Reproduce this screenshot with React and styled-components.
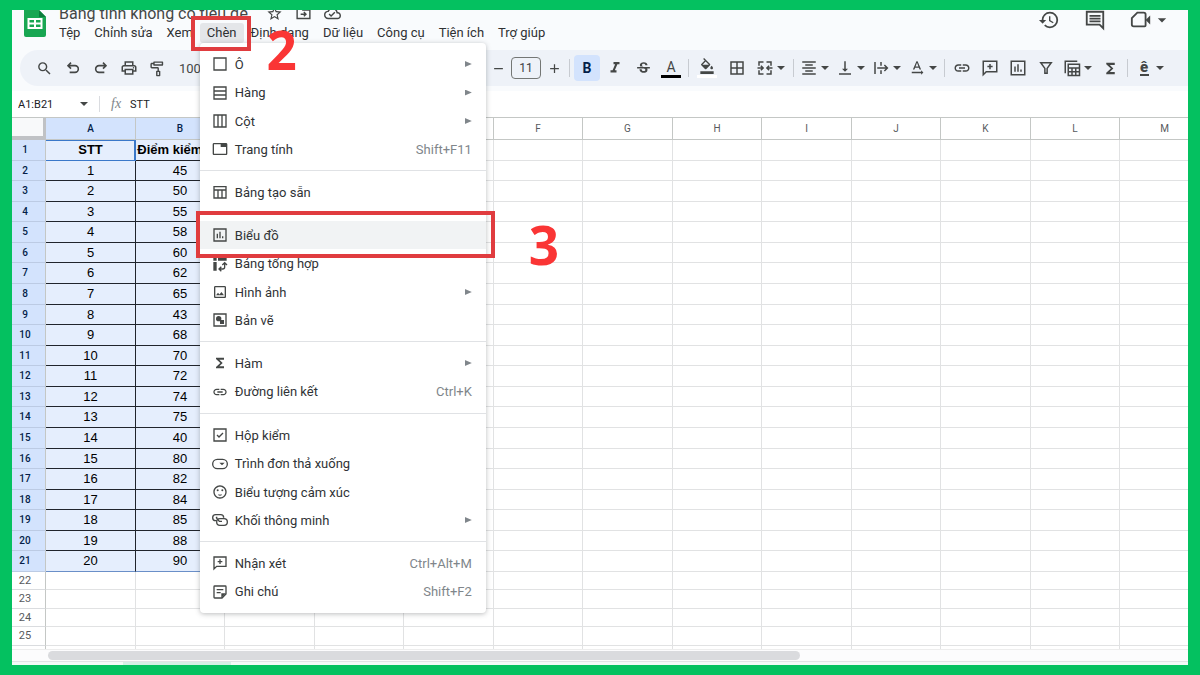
import * as React from 'react';
import styled, { createGlobalStyle, css } from "styled-components";
import {
    MdSearch,
    MdOutlinePrint,
    MdOutlineImagesearchRoller,
    MdFormatItalic,
    MdStrikethroughS,
    MdFormatColorFill,
    MdBorderAll,
    MdFormatAlignCenter,
    MdVerticalAlignBottom,
    MdTextRotationNone,
    MdLink,
    MdFunctions,
    MdArrowDropDown,
    MdAdd,
    MdRemove,
    MdStarBorder,
    MdHistory,
    MdOutlineImage,
    MdOutlineTab,
    MdSentimentSatisfied,
    MdOutlineCloudDone,
} from "react-icons/md";

const GlobalStyle = createGlobalStyle`
    * {
        box-sizing: border-box;
    }

    body {
        margin: 0;
        font-family: Roboto, "Liberation Sans", sans-serif;
        color: #3c4043;
    }

    button, input, select {
        font: inherit;
        color: inherit;
        border: 0;
        padding: 0;
        margin: 0;
        background: none;
    }
`;

const Frame = styled.div`
    height: 100vh;
    padding: 10px 12px;
    background: #04c160;
`;

const Sheet = styled.div`
    display: flex;
    flex-direction: column;
    height: 100%;
    overflow: hidden;
    background: #f9fbfd;
`;

/* ---------- header ---------- */

const Header = styled.header`
    display: flex;
    height: 40px;
    flex: none;
    padding: 0 16px 0 11px;
`;

const Logo = styled.svg`
    width: 24px;
    height: 28px;
    flex: none;
`;

const HeaderMain = styled.div`
    padding-left: 5px;
`;

const TitleRow = styled.div`
    display: flex;
    align-items: flex-end;
    height: 13px;
    padding-left: 7px;
    overflow: hidden;
`;

const Title = styled.h1`
    margin: 0;
    width: 207px;
    font-size: 16px;
    font-weight: 400;
    line-height: 18px;
    white-space: nowrap;
    color: #444746;
`;

const TitleIcon = styled.button`
    display: flex;
    width: 29px;
    height: 18px;
    color: #444746;
`;

const MenuBar = styled.nav`
    display: flex;
`;

const MenuAnchor = styled.div`
    position: relative;
    display: flex;
`;

const MenuButton = styled.button`
    height: 20px;
    padding: 0 7px;
    border-radius: 3px;
    font-size: 13px;
    line-height: 20px;
    white-space: nowrap;
    color: #2f3133;
    background: ${props => props.$open ? "#e4e6e9" : "none"};
`;

const Actions = styled.div`
    display: flex;
    align-items: center;
    gap: 24px;
    height: 20px;
    margin-left: auto;
`;

const ActionButton = styled.button`
    display: flex;
    align-items: center;
    color: #444746;
`;

/* ---------- toolbar ---------- */

const Toolbar = styled.div`
    display: flex;
    align-items: center;
    flex: none;
    height: 36px;
    margin: 0 0 5px 8px;
    padding-left: 9px;
    overflow: hidden;
    border-radius: 18px 0 0 18px;
    background: #eef2f8;
`;

const Tool = styled.button`
    display: flex;
    align-items: center;
    justify-content: center;
    flex: none;
    width: ${props => props.$wide ? 28 : 26}px;
    height: 26px;
    margin: 0 1px;
    border-radius: 4px;
    font-size: 14px;
    color: #444746;

    ${props => props.$active && css`
        font-weight: 700;
        color: #041e49;
        background: #d3e3fd;
    `}
`;

const SplitTool = styled(Tool)`
    gap: 2px;
    width: ${props => props.$wide ? 36 : 34}px;
`;

const Step = styled(Tool)`
    width: 24px;
    margin: 0;
`;

const Separator = styled.span`
    flex: none;
    width: 1px;
    height: 18px;
    margin: 0 3px;
    background: #c7cbd1;
`;

const ToolSelect = styled.select`
    flex: none;
    appearance: none;
    width: ${props => props.$width}px;
    height: 26px;
    padding-left: 8px;
    font-size: 13px;
    color: #444746;
`;

const SizeInput = styled.input`
    flex: none;
    width: 30px;
    height: 22px;
    margin: 0 1px;
    border: 1px solid #747775;
    border-radius: 4px;
    font-size: 12px;
    text-align: center;
`;

const ColorTool = styled.span`
    display: flex;
    flex-direction: column;
    align-items: center;
    width: 20px;
    height: 20px;
    border-bottom: 3px solid ${props => props.$color};
    line-height: 18px;
`;

const LetterIcon = styled.span`
    width: 9px;
    margin: 0 4px;
    border-bottom: 2px solid #444746;
    font-size: 15px;
    font-weight: 900;
    line-height: 13px;
`;

/* ---------- formula bar ---------- */

const FormulaBar = styled.div`
    display: flex;
    align-items: center;
    flex: none;
    height: 26px;
    padding-left: 6px;
    font-size: 11px;
    color: #202124;
    background: #fff;
`;

const NameBox = styled.input`
    width: 61px;
    font-size: 11px;
`;

const NameArrow = styled.button`
    display: flex;
    width: 20px;
    color: #444746;
`;

const Fx = styled.label`
    width: 31px;
    padding-left: 11px;
    border-left: 1px solid #dadce0;
    font-family: "Liberation Serif", serif;
    font-size: 14px;
    font-style: italic;
    line-height: 16px;
    color: #80868b;
`;

const FormulaInput = styled.input`
    flex: 1;
    font-size: 11px;
`;

/* ---------- grid ---------- */

const GridArea = styled.div`
    flex: 1;
    min-height: 0;
    overflow: hidden;
    background: #fff;
`;

const Grid = styled.table`
    width: 1px;
    table-layout: fixed;
    border-collapse: separate;
    border-spacing: 0;
    border-top: 1px solid #c4c7c5;
`;

const Corner = styled.td`
    height: 22px;
    padding: 0;
    border-right: 3px solid #c0c2c5;
    border-bottom: 4px solid #c0c2c5;
    background: #f8f9fa;
`;

const ColHead = styled.th`
    height: 22px;
    padding: 0;
    border-right: 1px solid #c4c7c5;
    border-bottom: 1px solid #c4c7c5;
    font-size: 10px;
    font-weight: ${props => props.$selected ? 500 : 400};
    color: ${props => props.$selected ? "#041e49" : "#575a5d"};
    background: ${props => props.$selected ? "#d3e3fd" : "#fff"};
`;

const RowHead = styled.th`
    padding: 0 7px 0 0;
    border-right: 1px solid #c4c7c5;
    border-bottom: 1px solid ${props => props.$selected ? "#bccbe4" : "#dadcdf"};
    font-size: ${props => props.$selected ? 10 : 11}px;
    font-weight: ${props => props.$selected ? 500 : 400};
    line-height: 12px;
    color: ${props => props.$selected ? "#041e49" : "#575a5d"};
    background: ${props => props.$selected ? "#d3e3fd" : "#fff"};
`;

const Cell = styled.td`
    padding: 0;
    border-right: 1px solid #e1e2e3;
    border-bottom: 1px solid #e1e2e3;
    font-family: "Liberation Sans", Arial, sans-serif;
    font-size: 13px;
    line-height: 16px;
    text-align: center;
    white-space: nowrap;
    color: #000;

    ${props => props.$selected && css`
        border-color: #20242c;
        background: #e5eefd;
    `}

    ${props => props.$head && css`
        font-weight: 700;
    `}

    ${props => props.$active && css`
        border-color: #3b78c9;
        box-shadow: inset -1px 0 #3b78c9, inset 0 1px #3b78c9;
    `}

    ${props => props.$last && css`
        border-bottom-color: #6a8fc8;
    `}
`;

const DataRow = styled.tr`
    height: 21px;

    &:nth-child(7n + 2),
    &:nth-child(7n + 4),
    &:nth-child(7n + 6) {
        height: 20px;
    }
`;

const EmptyRow = styled.tr`
    height: 18px;

    &:nth-child(even) {
        height: 19px;
    }
`;

const ScrollTrack = styled.div`
    flex: none;
    height: 13px;
    padding: 1px 0 1px 36px;
    border-top: 1px solid #ededed;
    border-bottom: 1px solid #e1e3e6;
    background: #fcfcfd;
`;

const ScrollThumb = styled.div`
    width: 66%;
    height: 9px;
    border-radius: 5px;
    background: #dadbde;
`;

const TabStrip = styled.div`
    flex: none;
    height: 3px;
    padding-left: 111px;
    background: #f4faf8;

    &::before {
        content: "";
        display: block;
        width: 108px;
        height: 3px;
        background: #d5efe6;
    }
`;

/* ---------- insert menu ---------- */

const Menu = styled.div`
    position: absolute;
    z-index: 2;
    top: 100%;
    left: 0;
    width: 286px;
    padding: 7px 0;
    border-radius: 4px;
    background: #fff;
    box-shadow: 0 1px 5px rgba(60, 64, 67, 0.35);
`;

const MenuSection = styled.div`
    & + & {
        margin-top: 7px;
        padding-top: 7px;
        border-top: 1px solid #e0e2e5;
    }
`;

const MenuItem = styled.button`
    position: relative;
    display: flex;
    align-items: center;
    width: 100%;
    height: 28px;
    padding: 0 14px 0 12px;
    font-size: 13px;
    text-align: left;
    color: #303336;
    background: ${props => props.$hover ? "#f1f3f4" : "none"};

    &:nth-child(3n + 2) {
        height: 29px;
    }

    svg {
        flex: none;
        width: 16px;
        height: 16px;
        margin-right: 7px;
        color: #444746;
    }
`;

const ItemLabel = styled.span`
    flex: 1;
    white-space: nowrap;
`;

const Shortcut = styled.span`
    color: #80868b;
`;

const SubArrow = styled.span`
    width: 7px;
    height: 6px;
    background: #80868b;
    clip-path: polygon(0 0, 100% 50%, 0 100%);
`;

/* ---------- tutorial marks ---------- */

const Mark = styled.span`
    position: absolute;
    z-index: 3;
    border: 4px solid #e03c3f;
    pointer-events: none;
`;

const ButtonMark = styled(Mark)`
    inset: -7px -7px -8px -9px;
`;

const ItemMark = styled(Mark)`
    inset: -10px -9px -9px -4px;
`;

const StepNumber = styled.span`
    position: absolute;
    top: 10px;
    left: calc(100% + ${props => props.$gap}px);
    font-family: "Open Sans", sans-serif;
    font-size: 53px;
    font-weight: 700;
    line-height: 40px;
    color: #fa3535;
`;

/* ---------- icons ---------- */

const Icon = ({ children, size = 18, width = 2 }) => (
    <svg width={size} height={size} viewBox="0 0 24 24" fill="none" stroke="currentColor" strokeWidth={width}>
        {children}
    </svg>
);

const UndoIcon = () => (
    <Icon size={16} width={2.4}><path d="M9 4L4.500 8.500 9 13M4.500 8.500H15a5 5 0 0 1 0 10H7" /></Icon>
);

const RedoIcon = () => (
    <Icon size={16} width={2.4}><path d="M15 4l4.500 4.500L15 13M19.500 8.500H9a5 5 0 0 0 0 10h8" /></Icon>
);

const MergeIcon = () => (
    <Icon>
        <path d="M10 4H4v5M14 4h6v5M10 20H4v-5M14 20h6v-5M2 12h7M22 12h-7M6.500 9l3 3-3 3M17.500 9l-3 3 3 3" />
    </Icon>
);

const OverflowIcon = () => (
    <Icon><path d="M4 4v16M12 4v5M12 15v5M7 12h13M16.500 8l4 4-4 4" /></Icon>
);

const CommentIcon = () => (
    <Icon><path d="M3 21V3h18v14H7zM12 6.500v7M8.500 10h7" /></Icon>
);

const ChartIcon = () => (
    <Icon><path d="M3 3h18v18H3zM8 10v7M12 7v10M16 14v3" /></Icon>
);

const FilterIcon = () => (
    <Icon><path d="M5 5h14l-5.500 7.500V19h-3v-6.500z" /></Icon>
);

const TableViewIcon = () => (
    <Icon><path d="M3 19V3h16M7 7h15v15H7zM7 12h15M7 17h15M12 12v10M17 12v10" /></Icon>
);

const CellIcon = () => <Icon><path d="M3 3h18v18H3z" /></Icon>;

const RowsIcon = () => <Icon><path d="M3 3h18v18H3zM3 9h18M3 15h18" /></Icon>;

const ColumnsIcon = () => <Icon><path d="M3 3h18v18H3zM9 3v18M15 3v18" /></Icon>;

const TableIcon = () => <Icon><path d="M3 4h18v17H3zM3 9h18M9 9v12M15 9v12" /></Icon>;

const PivotIcon = () => (
    <Icon>
        <path d="M2 2h5v5H2zM9 2h13v5H9zM2 9h5v13H2z" fill="currentColor" stroke="none" />
        <path d="M19 10v6.500a3 3 0 0 1-3 3h-5M15.500 13.500L19 10l3.500 3.500M14 16l-3.500 3.500L14 23" />
    </Icon>
);

const DrawingIcon = () => (
    <Icon>
        <path d="M3 3h18v18H3z" />
        <circle cx="10" cy="10" r="4" fill="currentColor" stroke="none" />
        <path d="M12 12h6v6h-6z" fill="currentColor" stroke="none" />
    </Icon>
);

const CheckIcon = () => <Icon><path d="M3 3h18v18H3zM7.500 12l3 3 6-6" /></Icon>;

const DropdownIcon = () => (
    <Icon>
        <rect x="1" y="5" width="22" height="14" rx="7" />
        <path d="M11 10h8l-4 4z" fill="currentColor" stroke="none" />
    </Icon>
);

const ChipsIcon = () => (
    <Icon>
        <path d="M7 13H5.500a4.500 4.500 0 0 1 0-9H13a4.500 4.500 0 0 1 4.500 4.500M6 8h2" />
        <rect x="7" y="10" width="16" height="10" rx="5" />
        <path d="M6 8l5 6h4" />
    </Icon>
);

const NoteIcon = () => (
    <Icon>
        <path d="M4 3h16a1 1 0 0 1 1 1v11l-6 6H4a1 1 0 0 1-1-1V4a1 1 0 0 1 1-1zM7 8.500h10M7 13h6" />
        <path d="M21 14l-7 7v-7z" fill="currentColor" stroke="none" />
    </Icon>
);

const MoveIcon = () => <Icon size={17}><path d="M3 5h6l2 2h10v12H3zM8 13h7M12.500 10l3 3-3 3" /></Icon>;

const NotesIcon = () => (
    <Icon size={22}><path d="M21 21V3H3v14h14zM6 7.500h12M6 10.500h12M6 13.500h12" /></Icon>
);

const VideoIcon = () => (
    <Icon size={22}>
        <path d="M8 4h7a2 2 0 0 1 2 2v12a1 1 0 0 1-1 1H4a2 2 0 0 1-2-2v-7z" />
        <path d="M17 12l5-5v10z" fill="currentColor" stroke="none" />
    </Icon>
);

const Caret = () => (
    <svg width="10" height="10" viewBox="0 0 10 10"><path d="M1 3h8L5 7z" fill="currentColor" /></svg>
);

/* ---------- data ---------- */

const menusBefore = ["Tệp", "Chỉnh sửa", "Xem"];
const menusAfter = ["Định dạng", "Dữ liệu", "Công cụ", "Tiện ích", "Trợ giúp"];

const sections = [
    [
        { label: "Ô", icon: <CellIcon />, sub: true },
        { label: "Hàng", icon: <RowsIcon />, sub: true },
        { label: "Cột", icon: <ColumnsIcon />, sub: true },
        { label: "Trang tính", icon: <MdOutlineTab />, shortcut: "Shift+F11" },
    ],
    [
        { label: "Bảng tạo sẵn", icon: <TableIcon /> },
    ],
    [
        { label: "Biểu đồ", icon: <ChartIcon />, step: 3 },
        { label: "Bảng tổng hợp", icon: <PivotIcon /> },
        { label: "Hình ảnh", icon: <MdOutlineImage />, sub: true },
        { label: "Bản vẽ", icon: <DrawingIcon /> },
    ],
    [
        { label: "Hàm", icon: <MdFunctions />, sub: true },
        { label: "Đường liên kết", icon: <MdLink />, shortcut: "Ctrl+K" },
    ],
    [
        { label: "Hộp kiểm", icon: <CheckIcon /> },
        { label: "Trình đơn thả xuống", icon: <DropdownIcon /> },
        { label: "Biểu tượng cảm xúc", icon: <MdSentimentSatisfied /> },
        { label: "Khối thông minh", icon: <ChipsIcon />, sub: true },
    ],
    [
        { label: "Nhận xét", icon: <CommentIcon />, shortcut: "Ctrl+Alt+M" },
        { label: "Ghi chú", icon: <NoteIcon />, shortcut: "Shift+F2" },
    ],
];

const columns = "ABCDEFGHIJKLM".split("");
const scores = [45, 50, 55, 58, 60, 62, 65, 43, 68, 70, 72, 74, 75, 40, 80, 82, 84, 85, 88, 90];
const rows = [["STT", "Điểm kiểm tra"], ...scores.map((score, i) => [i + 1, score])];
const emptyRows = [22, 23, 24, 25, 26];

/* ---------- parts ---------- */

const InsertMenu = () => (
    <Menu role="menu" aria-label="Chèn">
        {sections.map((items, i) => (
            <MenuSection key={i}>
                {items.map(item => (
                    <MenuItem key={item.label} role="menuitem" $hover={item.step}>
                        {item.icon}
                        <ItemLabel>{item.label}</ItemLabel>
                        {item.shortcut && <Shortcut>{item.shortcut}</Shortcut>}
                        {item.sub && <SubArrow />}
                        {item.step && (
                            <ItemMark>
                                <StepNumber $gap={38}>{item.step}</StepNumber>
                            </ItemMark>
                        )}
                    </MenuItem>
                ))}
            </MenuSection>
        ))}
    </Menu>
);

const SheetHeader = () => (
    <Header>
        <Logo viewBox="0 0 24 28">
            <path d="M1 0h15l7 7v18a2 2 0 0 1-2 2H3a2 2 0 0 1-2-2z" fill="#18a652" />
            <path d="M16 0l7 7h-7z" fill="#0b7d3c" />
            <path d="M5.500 9h13v9h-13zM5.500 13.500h13M12 9v9" fill="none" stroke="#fff" strokeWidth="2" />
        </Logo>
        <HeaderMain>
            <TitleRow>
                <Title>Bảng tính không có tiêu đề</Title>
                <TitleIcon aria-label="Gắn dấu sao"><MdStarBorder size={17} /></TitleIcon>
                <TitleIcon aria-label="Di chuyển"><MoveIcon /></TitleIcon>
                <TitleIcon aria-label="Trạng thái"><MdOutlineCloudDone size={17} /></TitleIcon>
            </TitleRow>
            <MenuBar>
                {menusBefore.map(name => <MenuButton key={name}>{name}</MenuButton>)}
                <MenuAnchor>
                    <MenuButton $open aria-haspopup="menu">Chèn</MenuButton>
                    <InsertMenu />
                    <ButtonMark>
                        <StepNumber $gap={20}>2</StepNumber>
                    </ButtonMark>
                </MenuAnchor>
                {menusAfter.map(name => <MenuButton key={name}>{name}</MenuButton>)}
            </MenuBar>
        </HeaderMain>
        <Actions>
            <ActionButton aria-label="Lịch sử"><MdHistory size={22} /></ActionButton>
            <ActionButton aria-label="Nhận xét"><NotesIcon /></ActionButton>
            <ActionButton aria-label="Cuộc gọi"><VideoIcon /><MdArrowDropDown size={20} /></ActionButton>
        </Actions>
    </Header>
);

const SheetToolbar = () => (
    <Toolbar role="toolbar">
        <Tool $wide aria-label="Tìm kiếm"><MdSearch size={17} /></Tool>
        <Tool aria-label="Hủy"><UndoIcon /></Tool>
        <Tool aria-label="Làm lại"><RedoIcon /></Tool>
        <Tool aria-label="In"><MdOutlinePrint size={18} /></Tool>
        <Tool aria-label="Sao chép định dạng"><MdOutlineImagesearchRoller size={17} /></Tool>
        <ToolSelect aria-label="Thu phóng" $width={134}><option>100%</option></ToolSelect>
        <ToolSelect aria-label="Phông chữ" $width={181}><option>Mặc định</option></ToolSelect>
        <Step aria-label="Giảm cỡ chữ"><MdRemove size={15} /></Step>
        <SizeInput aria-label="Cỡ chữ" defaultValue="11" />
        <Step aria-label="Tăng cỡ chữ"><MdAdd size={15} /></Step>
        <Separator />
        <Tool $active aria-label="Đậm">B</Tool>
        <Tool aria-label="Nghiêng"><MdFormatItalic size={18} /></Tool>
        <Tool aria-label="Gạch ngang"><MdStrikethroughS size={17} /></Tool>
        <Tool aria-label="Màu văn bản"><ColorTool $color="#000">A</ColorTool></Tool>
        <Separator />
        <Tool $wide aria-label="Màu nền"><ColorTool $color="#fff"><MdFormatColorFill size={16} /></ColorTool></Tool>
        <Tool $wide aria-label="Đường viền"><MdBorderAll size={18} /></Tool>
        <SplitTool $wide aria-label="Hợp nhất ô"><MergeIcon /><Caret /></SplitTool>
        <Separator />
        <SplitTool aria-label="Căn ngang"><MdFormatAlignCenter size={18} /><Caret /></SplitTool>
        <SplitTool aria-label="Căn dọc"><MdVerticalAlignBottom size={18} /><Caret /></SplitTool>
        <SplitTool aria-label="Xuống dòng"><OverflowIcon /><Caret /></SplitTool>
        <SplitTool aria-label="Xoay văn bản"><MdTextRotationNone size={18} /><Caret /></SplitTool>
        <Separator />
        <Tool aria-label="Chèn liên kết"><MdLink size={18} /></Tool>
        <Tool aria-label="Chèn nhận xét"><CommentIcon /></Tool>
        <Tool aria-label="Chèn biểu đồ"><ChartIcon /></Tool>
        <Tool aria-label="Tạo bộ lọc"><FilterIcon /></Tool>
        <SplitTool aria-label="Chế độ xem"><TableViewIcon /><Caret /></SplitTool>
        <Tool aria-label="Hàm"><MdFunctions size={17} /></Tool>
        <Separator />
        <SplitTool $wide aria-label="Công cụ nhập"><LetterIcon>ê</LetterIcon><Caret /></SplitTool>
    </Toolbar>
);

const SheetGrid = () => (
    <GridArea>
        <Grid>
            <colgroup>
                <col width="34" />
                {columns.map((name, i) => <col key={name} width={i % 2 ? 89 : 90} />)}
            </colgroup>
            <thead>
                <tr>
                    <Corner />
                    {columns.map((name, i) => (
                        <ColHead key={name} scope="col" $selected={i < 2}>{name}</ColHead>
                    ))}
                </tr>
            </thead>
            <tbody>
                {rows.map((row, r) => (
                    <DataRow key={r}>
                        <RowHead scope="row" $selected>{r + 1}</RowHead>
                        {columns.map((name, c) => (
                            <Cell
                                key={name}
                                $selected={c < 2}
                                $head={r === 0}
                                $active={r === 0 && c === 0}
                                $last={c < 2 && r === rows.length - 1}
                            >
                                {row[c]}
                            </Cell>
                        ))}
                    </DataRow>
                ))}
            </tbody>
            <tbody>
                {emptyRows.map((n, i) => (
                    <EmptyRow key={n}>
                        <RowHead scope="row">{i < 4 ? n : null}</RowHead>
                        {columns.map(name => <Cell key={name} />)}
                    </EmptyRow>
                ))}
            </tbody>
        </Grid>
    </GridArea>
);

const App = () => {
    return (
        <Frame>
            <GlobalStyle />
            <Sheet>
                <SheetHeader />
                <SheetToolbar />
                <FormulaBar>
                    <NameBox aria-label="Hộp tên" defaultValue="A1:B21" />
                    <NameArrow aria-label="Danh sách tên"><Caret /></NameArrow>
                    <Fx htmlFor="formula">fx</Fx>
                    <FormulaInput id="formula" defaultValue="STT" />
                </FormulaBar>
                <SheetGrid />
                <ScrollTrack>
                    <ScrollThumb />
                </ScrollTrack>
                <TabStrip />
            </Sheet>
        </Frame>
    )
}

export default App;
